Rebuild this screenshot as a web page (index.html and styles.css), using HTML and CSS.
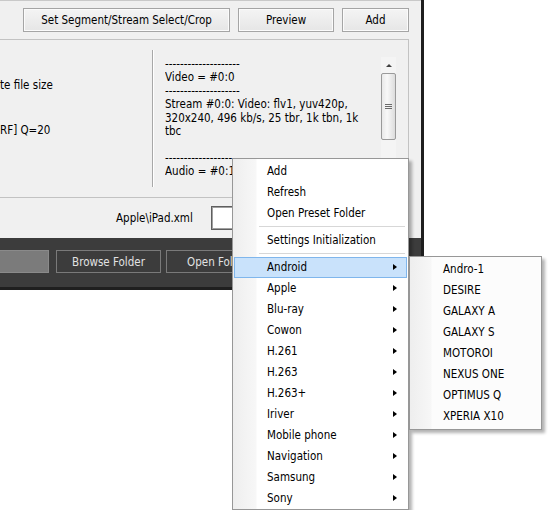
FILE: index.html
```html
<!DOCTYPE html>
<html>
<head>
<meta charset="utf-8">
<title>Preset menu</title>
<link rel="stylesheet" href="styles.css">
</head>
<body>
<div class="stage">
  <div class="window">
    <div class="toolbar">
      <button class="btn btn-seg">Set Segment/Stream Select/Crop</button>
      <button class="btn btn-preview">Preview</button>
      <button class="btn btn-add">Add</button>
    </div>
    <div class="panel">
      <div class="opts">
        <div class="opt opt1">te file size</div>
        <div class="opt opt2">RF] Q=20</div>
      </div>
      <div class="vsep"></div>
      <div class="info">
        <div class="info-text">--------------------
Video = #0:0
--------------------
Stream #0:0: Video: flv1, yuv420p,
320x240, 496 kb/s, 25 tbr, 1k tbn, 1k
tbc

--------------------
Audio = #0:1</div>
        <div class="scrollbar">
          <div class="sb-up"><span class="sb-arrow"></span></div>
          <div class="sb-thumb"><span class="grip"></span><span class="grip"></span><span class="grip"></span></div>
        </div>
      </div>
    </div>
    <div class="preset-row">
      <span class="preset-name">Apple\iPad.xml</span>
      <div class="preset-box"></div>
    </div>
    <div class="darkbar">
      <div class="progress"></div>
      <button class="dbtn">Browse Folder</button>
      <button class="dbtn">Open Folder</button>
    </div>
  </div>

  <div class="menu main-menu">
    <div class="item">Add</div>
    <div class="item">Refresh</div>
    <div class="item">Open Preset Folder</div>
    <div class="sep"></div>
    <div class="item">Settings Initialization</div>
    <div class="sep"></div>
    <div class="item sub active">Android</div>
    <div class="item sub">Apple</div>
    <div class="item sub">Blu-ray</div>
    <div class="item sub">Cowon</div>
    <div class="item sub">H.261</div>
    <div class="item sub">H.263</div>
    <div class="item sub">H.263+</div>
    <div class="item sub">Iriver</div>
    <div class="item sub">Mobile phone</div>
    <div class="item sub">Navigation</div>
    <div class="item sub">Samsung</div>
    <div class="item sub">Sony</div>
  </div>

  <div class="menu sub-menu">
    <div class="item">Andro-1</div>
    <div class="item">DESIRE</div>
    <div class="item">GALAXY A</div>
    <div class="item">GALAXY S</div>
    <div class="item">MOTOROI</div>
    <div class="item">NEXUS ONE</div>
    <div class="item">OPTIMUS Q</div>
    <div class="item">XPERIA X10</div>
  </div>
</div>
</body>
</html>
```

FILE: styles.css
```css
* { box-sizing: border-box; }

html, body {
  margin: 0;
  padding: 0;
  background: #ffffff;
}

body {
  font-family: "DejaVu Sans", "Liberation Sans", sans-serif;
  font-stretch: condensed;
  font-size: 11.5px;
  color: #000;
}

.stage {
  position: relative;
  width: 550px;
  height: 510px;
  overflow: hidden;
}

.window {
  width: 424px;
  height: 290px;
  background: #f0f0f0;
  border-right: 3px solid #1e1e1e;
  display: flex;
  flex-direction: column;
}

/* toolbar */
.toolbar {
  height: 39px;
  border-top: 1px solid #c9c9c9;
  padding: 7px 12px 0 0;
  display: flex;
  justify-content: flex-end;
  gap: 8px;
}

.btn {
  font: inherit;
  color: #000;
  height: 24px;
  margin: 0;
  padding: 0;
  border: 1px solid #a5a5a5;
  background: linear-gradient(#f4f4f4, #e6e6e6);
  box-shadow: inset 0 0 0 1px #fbfbfb;
}
.btn-seg { width: 207px; }
.btn-preview { width: 96px; }
.btn-add { width: 67px; }

/* panel */
.panel {
  width: 409px;
  height: 159px;
  border-top: 1px solid #c2c2c2;
  border-right: 1px solid #c2c2c2;
  border-bottom: 1px solid #c2c2c2;
  display: flex;
}

.opts {
  width: 152px;
  padding-top: 39px;
}
.opt {
  line-height: 13px;
  height: 13px;
  white-space: nowrap;
}
.opt2 { margin-top: 32px; }

.vsep {
  width: 2px;
  height: 137px;
  margin-top: 10px;
  border-left: 1px solid #a8a8a8;
  border-right: 1px solid #ffffff;
}

.info {
  flex: 1;
  display: flex;
  padding-left: 11px;
}
.info-text {
  flex: 1;
  white-space: pre;
  overflow: hidden;
  line-height: 13.4px;
  padding-top: 18px;
}

.scrollbar {
  width: 15px;
  margin-right: 12px;
  margin-top: 17px;
  height: 140px;
  background: #f4f4f4;
  display: flex;
  flex-direction: column;
  align-items: center;
}
.sb-up {
  height: 16px;
  width: 15px;
  display: flex;
  align-items: center;
  justify-content: center;
}
.sb-arrow {
  width: 0;
  height: 0;
  border-left: 3px solid transparent;
  border-right: 3px solid transparent;
  border-bottom: 3px solid #404040;
}
.sb-thumb {
  width: 15px;
  height: 67px;
  border: 1px solid #9a9a9a;
  border-radius: 2px;
  background: linear-gradient(to right, #e9e9e9, #f8f8f8 40%, #dcdcdc);
  display: flex;
  flex-direction: column;
  align-items: center;
  justify-content: center;
  gap: 1px;
}
.grip {
  width: 7px;
  height: 1px;
  background: #6a6a6a;
}

/* preset row */
.preset-row {
  height: 40px;
  display: flex;
  align-items: center;
  padding-left: 116px;
}
.preset-name { line-height: 13px; }
.preset-box {
  margin-left: 18px;
  width: 150px;
  height: 24px;
  background: #fff;
  border: 1px solid #5e5e5e;
  box-shadow: inset 0 0 0 1px #a0a0a0;
}

/* dark bar */
.darkbar {
  flex: 1;
  background: #3c3c3c;
  border-bottom: 3px solid #1f1f1f;
  padding-top: 12px;
  display: flex;
  align-items: flex-start;
}
.progress {
  width: 49px;
  height: 23px;
  background: #7b7b7b;
  border: 1px solid #8a8a8a;
  border-left: 0;
}
.dbtn {
  font: inherit;
  color: #e2e2e2;
  height: 23px;
  width: 105px;
  margin: 0 0 0 7px;
  padding: 0;
  background: #3c3c3c;
  border: 1px solid #7a7a7a;
  text-align: center;
}
.dbtn + .dbtn { margin-left: 5px; }

/* context menus */
.menu {
  position: absolute;
  border: 1px solid #979797;
  padding: 2px 1px;
  box-shadow: 3px 3px 3px rgba(0, 0, 0, 0.3);
}
.main-menu {
  left: 232px;
  top: 158px;
  width: 177px;
  padding-bottom: 0;
  background: linear-gradient(to right, #eeeeee, #f7f7f7 23px, #ffffff 24px);
}
.sub-menu {
  left: 409px;
  top: 256px;
  width: 133px;
  background: linear-gradient(to right, #eeeeee, #f7f7f7 21px, #fcfcfc 22px);
}

.item {
  position: relative;
  height: 21px;
  line-height: 19px;
  border: 1px solid transparent;
  padding-left: 32px;
  white-space: nowrap;
}
.sub-menu .item { padding-left: 31px; }

.item.active {
  background: #c9e2fb;
  border-color: #7fb6ec;
}

.item.sub::after {
  content: "";
  position: absolute;
  right: 9px;
  top: 6px;
  width: 0;
  height: 0;
  border-top: 3.5px solid transparent;
  border-bottom: 3.5px solid transparent;
  border-left: 4px solid #000;
}

.sep {
  height: 6px;
  margin-left: 25px;
  margin-right: 2px;
  padding-top: 2px;
}
.sep::before {
  content: "";
  display: block;
  height: 1px;
  background: #d7d7d7;
  border-bottom: 1px solid #ffffff;
  box-sizing: content-box;
}
```
